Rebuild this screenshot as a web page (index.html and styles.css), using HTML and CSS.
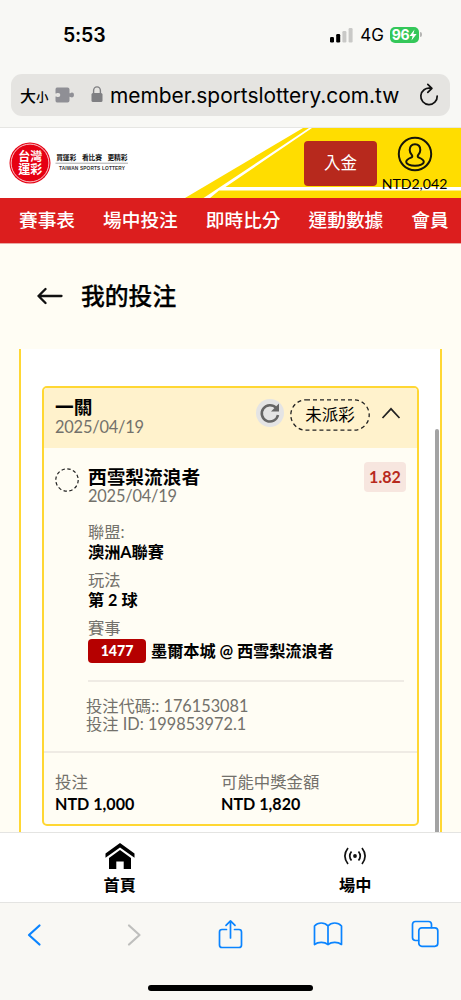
FILE: index.html
```html
<!DOCTYPE html>
<html lang="zh-Hant">
<head>
<meta charset="utf-8">
<title>我的投注</title>
<link rel="stylesheet" href="styles.css">
</head>
<body>
<div class="screen">
  <div class="browser-top">
    <div class="status">
      <span class="time">5:53</span>
      <svg class="signal" width="24" height="16" viewBox="0 0 24 16"><rect x="0" y="10" width="4" height="5.5" rx="1.2"/><rect x="6.200" y="7" width="4" height="8.500" rx="1.200"/><g fill="#c9c9c7"><rect x="12.400" y="4" width="4" height="11.500" rx="1.200"/><rect x="18.600" y="1" width="4" height="14.500" rx="1.200"/></g></svg>
      <span class="net">4G</span>
      <span class="battery"><span>96</span><svg width="8" height="12" viewBox="0 0 8 12"><path d="M5.500 0.500L0.500 7H3.600L2.500 11.500L7.600 5H4.400z" fill="#fff"/></svg></span><i class="cap"></i>
    </div>
    <div class="urlbar">
      <span class="aa">大<small>小</small></span>
      <svg class="puzzle" width="20" height="16" viewBox="0 0 20 16"><path d="M2 0.500H12.500Q14.500 0.500 14.500 2.500V6.200Q15.500 6.300 16 5.700Q19 5 19 8Q19 11 16 10.300Q15.500 9.700 14.500 9.800V13.500Q14.500 15.500 12.500 15.500H2Q0.500 15.500 0.500 13.500V9.600Q1.500 9.200 2.200 9.900Q5.300 10.500 5.300 8Q5.300 5.500 2.200 6.100Q1.500 6.800 0.500 6.400V2.500Q0.500 0.500 2 0.500z" fill="#8f8f95"/></svg>
      <svg class="lock" width="12" height="17" viewBox="0 0 12 17"><rect x="0.500" y="7" width="11" height="9" rx="1.500" fill="#7f7f82"/><path d="M2.600 8V4.600a3.400 3.700 0 0 1 6.800 0V8" fill="none" stroke="#7f7f82" stroke-width="1.400"/></svg>
      <span class="url">member.sportslottery.com.tw</span>
      <svg class="reload" width="20" height="24" viewBox="0 0 20 24" fill="none" stroke="#111" stroke-width="1.700" stroke-linecap="round" stroke-linejoin="round"><path d="M11.500 5.300A8.200 8.200 0 1 0 18.200 13M8.800 1.300L12.900 5.300L8.800 9.300"/></svg>
    </div>
  </div>

  <header class="site-header">
    <svg class="header-art" width="461" height="70" viewBox="0 0 461 70"><path d="M185 70L303 0H461V70z" fill="#fd0"/><path d="M203.500 70L309 0H312L225.500 59H461V62.500H219L210 70z" fill="#fff"/></svg>
    <svg class="logo" width="122" height="44" viewBox="0 0 122 44">
      <circle cx="21" cy="22" r="20.500" fill="#e60012"/><circle cx="21" cy="22" r="18.900" fill="none" stroke="#fff" stroke-width=".8"/>
      <g class="logo-seal"><text x="9.300" y="20" textLength="24">台灣</text><text x="9.300" y="32.700" textLength="24">運彩</text></g>
      <g class="logo-tag"><text x="47.200" y="18.500" textLength="20">買運彩</text><text x="73" y="18.500" textLength="20">看比賽</text><text x="98.500" y="18.500" textLength="20">更精彩</text></g>
      <path d="M46.500 22.200H119" stroke="#aaa" stroke-width="1"/>
      <text class="logo-en" x="50" y="28.700" textLength="66">TAIWAN SPORTS LOTTERY</text>
    </svg>
    <div class="deposit">入金</div>
    <div class="account">
      <svg width="36" height="36" viewBox="0 0 36 36" fill="none" stroke="#15150a" stroke-width="2"><circle cx="18" cy="18" r="16.200"/><path d="M18 8.200C14.500 8.200 12.700 10.500 12.700 14C12.700 16.300 13.700 18 15 19.200C15.600 20.200 15.300 21 14 21.600C11 22.800 9.200 23.500 9.200 26C9.200 28 13 29.700 18 29.700S26.800 28 26.800 26C26.800 23.500 25 22.800 22 21.600C20.700 21 20.400 20.200 21 19.200C22.300 18 23.300 16.300 23.300 14C23.300 10.500 21.500 8.200 18 8.200z"/></svg>
      <span>NTD2,042</span>
    </div>
  </header>
  <nav class="nav"><span>賽事表</span><span>場中投注</span><span>即時比分</span><span>運動數據</span><span>會員</span></nav>

  <div class="title">
    <svg width="26" height="18" viewBox="0 0 26 18" fill="none" stroke="#111" stroke-width="2.300" stroke-linecap="round" stroke-linejoin="round"><path d="M1.500 9H24.500M8.500 2L1.500 9L8.500 16"/></svg>
    <h1>我的投注</h1>
  </div>

  <main class="panel">
    <section class="card">
      <div class="card-head">
        <div class="grow"><div class="name">一關</div><div class="date">2025/04/19</div></div>
        <div class="refresh"><svg width="22" height="22" viewBox="0 0 22 22"><path d="M17.200 6A8.200 8.200 0 1 0 19 13" fill="none" stroke="#666" stroke-width="2.500"/><path d="M20 1.500V9.500H12z" fill="#666"/></svg></div>
        <div class="pill"><svg class="pill-line" width="80" height="32" viewBox="0 0 80 32"><rect x=".8" y=".8" width="78.400" height="30.400" rx="15.200" fill="none" stroke="#222" stroke-width="1.300" stroke-dasharray="4 3"/></svg><span>未派彩</span></div>
        <svg class="chev" width="20" height="12" viewBox="0 0 20 12" fill="none" stroke="#222" stroke-width="1.700"><path d="M1.500 11L10 1.800L18.500 11"/></svg>
      </div>
      <div class="bet">
        <svg class="ring" width="24" height="24" viewBox="0 0 24 24"><circle cx="12" cy="12" r="11.200" fill="none" stroke="#222" stroke-width="1.200" stroke-dasharray="3.400 2.460"/></svg>
        <div class="bet-body">
          <div class="bet-top"><div class="grow"><div class="name">西雪梨流浪者</div><div class="date">2025/04/19</div></div><div class="odds">1.82</div></div>
          <dl class="facts">
            <dt>聯盟:</dt><dd>澳洲A聯賽</dd>
            <dt>玩法</dt><dd>第 2 球</dd>
            <dt>賽事</dt><dd class="match"><b class="code">1477</b><span>墨爾本城 @ 西雪梨流浪者</span></dd>
          </dl>
          <div class="ids"><div>投注代碼:: 176153081</div><div>投注 ID: 199853972.1</div></div>
        </div>
      </div>
      <div class="totals">
        <div><div class="label">投注</div><div class="amount">NTD 1,000</div></div>
        <div><div class="label">可能中獎金額</div><div class="amount">NTD 1,820</div></div>
      </div>
    </section>
    <i class="scrollbar"></i>
  </main>

  <div class="tabs">
    <div class="tab"><svg width="30" height="28" viewBox="0 0 30 28"><path d="M15 1L29.500 11.500V15.800L15 5.500L.5 15.800V11.500z"/><path d="M15 8L26 16V27H18.700V19.500H11.300V27H4V16z"/></svg><span>首頁</span></div>
    <div class="tab"><svg width="24" height="28" viewBox="0 0 24 28" fill="none" stroke="#111" stroke-width="1.700"><circle cx="12" cy="14" r="1.900" fill="#111" stroke="none"/><path d="M8.500 9.500Q5 14 8.500 18.500M15.500 9.500Q19 14 15.500 18.500M5 6Q-1.200 14 5 22M19 6Q25.200 14 19 22"/></svg><span>場中</span></div>
  </div>

  <footer class="toolbar">
    <div class="tools">
      <svg width="30" height="30" viewBox="-7 0 30 30"><path d="M12.500 5.500L2 15L12.500 24.500"/></svg>
      <svg class="off" width="30" height="30" viewBox="-9.500 0 30 30"><path d="M1.500 5.500L12 15L1.500 24.500"/></svg>
      <svg class="thin" width="30" height="32" viewBox="-1.500 1 30 32"><path d="M9 11.500H4.500Q2 11.500 2 14V27Q2 29.500 4.500 29.500H21.500Q24 29.500 24 27V14Q24 11.500 21.500 11.500H17M13 20V3M8.500 7.300L13 2.800L17.500 7.300"/></svg>
      <svg class="thin" width="30" height="30" viewBox="0 1 30 30"><path d="M15 7V25.500C11.500 23 5.500 22.500 1.500 25.500V7C5 3 11.500 3 15 7C18.500 3 25 3 28.500 7V25.500C24.500 22.500 18.500 23 15 25.500"/></svg>
      <svg class="thin" width="30" height="30" viewBox="0 1 30 30"><rect x="7.800" y="8.800" width="19" height="18.500" rx="3"/><path d="M7.500 21.500H4.500Q1.500 21.500 1.500 18.500V5.500Q1.500 2.500 4.500 2.500H17.500Q20.500 2.500 20.500 5.500V8.500"/></svg>
    </div>
    <i class="home-bar"></i>
  </footer>
</div>
</body>
</html>
```
FILE: styles.css
```css
* { box-sizing: border-box; }
body { margin: 0; font-family: Lato, "Noto Sans CJK TC", sans-serif; color: #000; }
svg { display: block; flex: none; }
.screen { width: 461px; height: 1000px; overflow: hidden; background: #fffdf4; display: flex; flex-direction: column; white-space: nowrap; }
.screen > * { flex: none; }

.browser-top { height: 128px; background: #f8f8f5; border-bottom: 1px solid #e6e6e3; padding: 0 11px; font-family: Inter, "Noto Sans CJK TC", sans-serif; }
.status { height: 74px; display: flex; align-items: center; padding: 0 28px 5px 52px; }
.time { font-size: 19.5px; font-weight: 600; width: 268px; letter-spacing: -.2px; }
.net { font-size: 17px; font-weight: 400; margin-left: 6px; width: 30px; }
.battery { width: 29px; height: 16px; border-radius: 5px; background: #34c759; color: #fff; display: flex; align-items: center; justify-content: center; font-size: 14px; font-weight: 700; line-height: 16px; letter-spacing: -.3px; }
.cap { width: 2px; height: 5px; margin-left: 1px; border-radius: 0 2px 2px 0; background: #b5b5b3; }
.urlbar { height: 42px; border-radius: 11px; background: #e5e4e1; display: flex; align-items: center; padding: 0 11px 0 9px; }
.aa { font-size: 16px; font-weight: 500; width: 35px; }
.aa small { font-size: 12.5px; }
.lock { margin-left: 16px; margin-bottom: 2px; }
.url { font-size: 20.9px; margin-left: 7px; padding-top: 1px; flex: 1; }

.site-header { position: relative; height: 69.5px; display: flex; background: #fff; padding-left: 9px; overflow: hidden; }
.header-art { position: absolute; left: 0; top: 0; }
.logo { position: relative; margin-top: 13px; }
.logo text { font-family: "Noto Sans CJK TC", sans-serif; }
.logo-seal { font-size: 12px; font-weight: 700; fill: #fff; }
.logo-tag { font-size: 6.8px; font-weight: 700; fill: #111; }
.logo .logo-en { font-family: "Liberation Sans", sans-serif; font-size: 4.8px; font-weight: 700; fill: #333; }
.deposit { position: relative; margin: 13px 0 0 173px; width: 73px; height: 45px; border-radius: 4px; background: #b7291d; color: #fff; text-align: center; font-size: 16.5px; line-height: 45px; font-weight: 400; }
.account { position: relative; width: 75px; margin-top: 8px; display: flex; flex-direction: column; align-items: center; font-size: 14.1px; line-height: 18px; }
.account span { margin-top: 3px; }
.nav { height: 46px; background: #dc1e1e; border-bottom: 1px solid #e9aaa4; color: #fff; display: flex; gap: 28px; padding-left: 19px; font-size: 18.7px; line-height: 45px; font-weight: 500; }

.title { height: 105.5px; display: flex; align-items: center; padding-left: 37px; gap: 18px; }
h1 { margin: 0; font-size: 23.8px; line-height: 30px; font-weight: 500; -webkit-text-stroke: .25px #000; }

.panel { position: relative; height: 483px; margin: 0 19px; border: solid #ffd733; border-width: 0 2px; background: #fff; padding: 37px 21px 0; }
.card { height: 440px; border: 2px solid #ffd733; border-radius: 5px; background: #fffdf4; overflow: hidden; }
.card-head { height: 60px; background: #fff2cc; display: flex; align-items: center; padding: 0 16px 0 11px; }
.grow { flex: 1; }
.name { font-size: 18.7px; line-height: 20px; font-weight: 700; }
.date { font-size: 16.4px; letter-spacing: -.2px; line-height: 19px; color: #73716b; }
.card-head .grow { margin-bottom: 3px; }
.refresh { width: 28px; height: 28px; border-radius: 50%; background: #e4e4e4; padding: 3px; margin: 0 6px 10px 0; }
.pill { position: relative; width: 80px; height: 32px; text-align: center; font-size: 16.5px; line-height: 33px; margin: 0 11px 7px 0; }
.pill-line { position: absolute; inset: 0; }
.chev { margin-bottom: 11px; }
.bet { display: flex; gap: 9px; padding: 14px 13px 0 11px; height: 303px; }
.ring { margin-top: 6px; }
.bet-body { flex: 1; }
.bet-top { display: flex; height: 60px; padding-top: 5px; }
.bet-top .date { line-height: 18px; }
.odds { width: 42px; height: 30px; margin: -5px -2px 0 0; border-radius: 4px; background: #f7e6df; color: #b7291d; font-weight: 700; font-size: 16.1px; line-height: 30px; text-align: center; }
.facts { margin: 0; font-size: 16.3px; line-height: 19px; }
dt { color: #73716b; height: 20px; }
dd { margin: 0 0 8px; font-weight: 700; height: 20px; font-size: 16.2px; }
.match { display: flex; align-items: center; gap: 5px; height: 25px; margin-bottom: 17px; letter-spacing: -.05px; }
.code { width: 58px; height: 24px; border-radius: 4px; background: #b50000; color: #fff; font-size: 14.2px; line-height: 24px; text-align: center; }
.ids { border-top: 2px solid #efebe4; padding-top: 15px; font-size: 16.3px; line-height: 18px; color: #73716b; }
.ids div { margin-left: -2px; }
.totals { border-top: 2px solid #efebe4; display: grid; grid-template-columns: 166px 1fr; padding: 18px 11px 0; font-size: 16.4px; line-height: 22px; }
.label { color: #73716b; }
.amount { font-weight: 700; font-size: 16.1px; }
.scrollbar { position: absolute; right: 1px; top: 80px; width: 4px; height: 403px; border-radius: 2px 2px 0 0; background: #a3a3a3; }

.tabs { height: 71px; background: #fff; border: solid #e4e4e2; border-width: 1px 0; display: flex; padding-left: 2px; overflow: hidden; }
.tab { flex: none; width: 235.5px; display: flex; flex-direction: column; align-items: center; padding-top: 9px; font-size: 16.2px; line-height: 22px; font-weight: 700; }
.tab span { margin-top: 4px; }
.toolbar { height: 97px; background: #f9f8f4; }
.tools { height: 63px; display: flex; align-items: center; justify-content: space-between; padding: 0 20px; fill: none; stroke: #0a84ff; stroke-width: 2.200; stroke-linecap: round; stroke-linejoin: round; }
.tools .thin { stroke-width: 1.700; }
.tools .off { stroke: #bfbfbd; }
.home-bar { display: block; width: 165px; height: 6px; margin: 19px auto 0; border-radius: 3px; background: #000; }
```
